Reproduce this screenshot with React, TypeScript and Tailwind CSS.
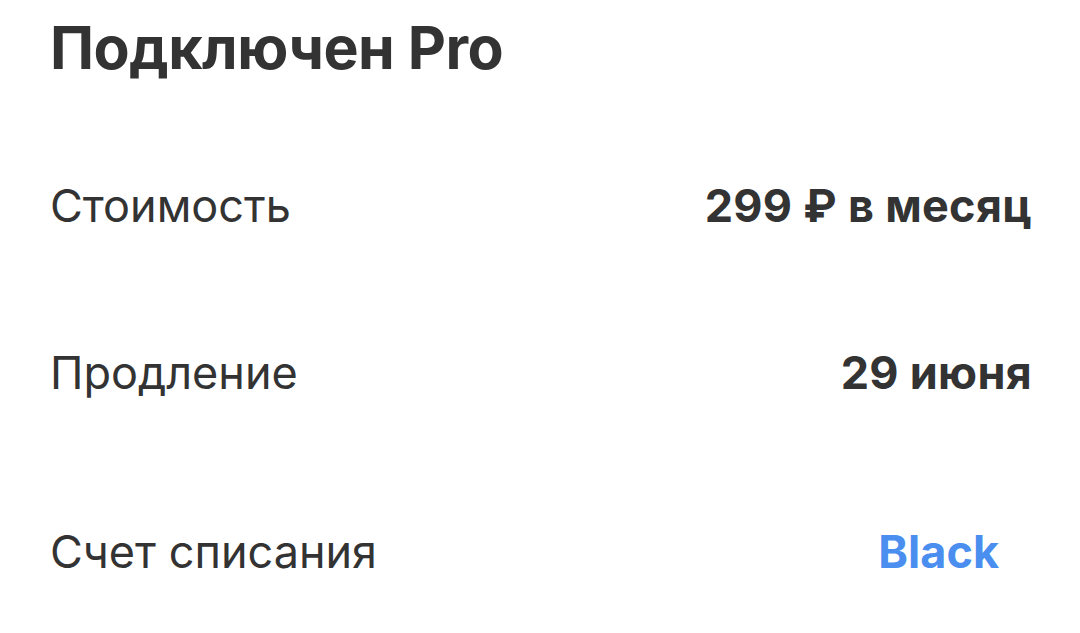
const rows = [
  { label: "Стоимость", value: "299 ₽ в месяц", gap: "mt-[92px]" },
  { label: "Продление", value: "29 июня", gap: "mt-[107px]" },
];

export default function App() {
  return (
    <div
      className="w-[1080px] h-[633px] bg-white text-[#333333] pl-[50px] pr-[48px] overflow-hidden"
      style={{ fontFamily: "Inter, 'Noto Sans', sans-serif" }}
    >
      <h1 className="pt-[12px] text-[59px] leading-[72px] font-bold tracking-[-0.5px]">
        Подключен Pro
      </h1>
      <div className="flex flex-col">
        {rows.map((row) => (
          <div key={row.label} className={`${row.gap} flex items-center justify-between h-[60px]`}>
            <span className="text-[45px] font-normal">{row.label}</span>
            <span className="text-[45px] font-bold tracking-[0.3px]">{row.value}</span>
          </div>
        ))}
        <div className="mt-[119px] flex items-center justify-between h-[60px]">
          <span className="text-[45px] font-normal">Счет списания</span>
          <span className="text-[45px] font-bold text-[#4a8ef0] mr-[33px]">Black</span>
        </div>
      </div>
    </div>
  );
}
